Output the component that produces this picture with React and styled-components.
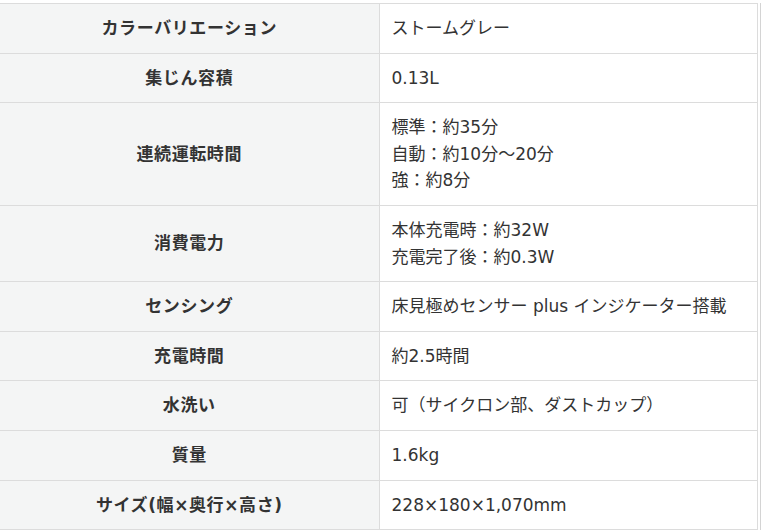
import styled, { createGlobalStyle } from "styled-components";

const specs = [
  { label: "カラーバリエーション", value: ["ストームグレー"] },
  { label: "集じん容積", value: ["0.13L"] },
  { label: "連続運転時間", value: ["標準：約35分", "自動：約10分～20分", "強：約8分"] },
  { label: "消費電力", value: ["本体充電時：約32W", "充電完了後：約0.3W"] },
  { label: "センシング", value: ["床見極めセンサー plus インジケーター搭載"] },
  { label: "充電時間", value: ["約2.5時間"] },
  { label: "水洗い", value: ["可（サイクロン部、ダストカップ）"] },
  { label: "質量", value: ["1.6kg"] },
  { label: "サイズ(幅×奥行×高さ)", value: ["228×180×1,070mm"] },
];

export default function App() {
  return (
    <>
      <GlobalStyle />
      <Page>
        <SpecTable>
          <tbody>
            {specs.map((row) => (
              <tr key={row.label}>
                <Label>{row.label}</Label>
                <Value>
                  {row.value.map((line) => (
                    <Line key={line}>{line}</Line>
                  ))}
                </Value>
              </tr>
            ))}
          </tbody>
        </SpecTable>
      </Page>
    </>
  );
}

const GlobalStyle = createGlobalStyle`
  body {
    margin: 0;
    background: #fff;
    font-family: "DejaVu Sans", "Noto Sans CJK JP", sans-serif;
    color: #333;
  }
`;

const Page = styled.div`
  padding-top: 3px;
  width: 761px;
  overflow: hidden;
`;

const SpecTable = styled.table`
  width: 758px;
  border-collapse: collapse;
  table-layout: fixed;
  font-size: 17px;
  line-height: 26.6px;
  box-shadow: 2px 0 0 #fff, 4px 0 0 #d4d4d4;
`;

const Label = styled.th`
  width: 379px;
  box-sizing: border-box;
  background: #f4f5f5;
  border: 1px solid #dcdcdc;
  border-left: none;
  padding: 11px 12px;
  font-weight: 700;
  letter-spacing: 0.6px;
  text-align: center;
  vertical-align: middle;
  color: #333;
`;

const Value = styled.td`
  background: #fff;
  border: 1px solid #dcdcdc;
  padding: 11px 12px;
  text-align: left;
  vertical-align: middle;
  color: #333;
`;

const Line = styled.div`
  white-space: nowrap;
`;
